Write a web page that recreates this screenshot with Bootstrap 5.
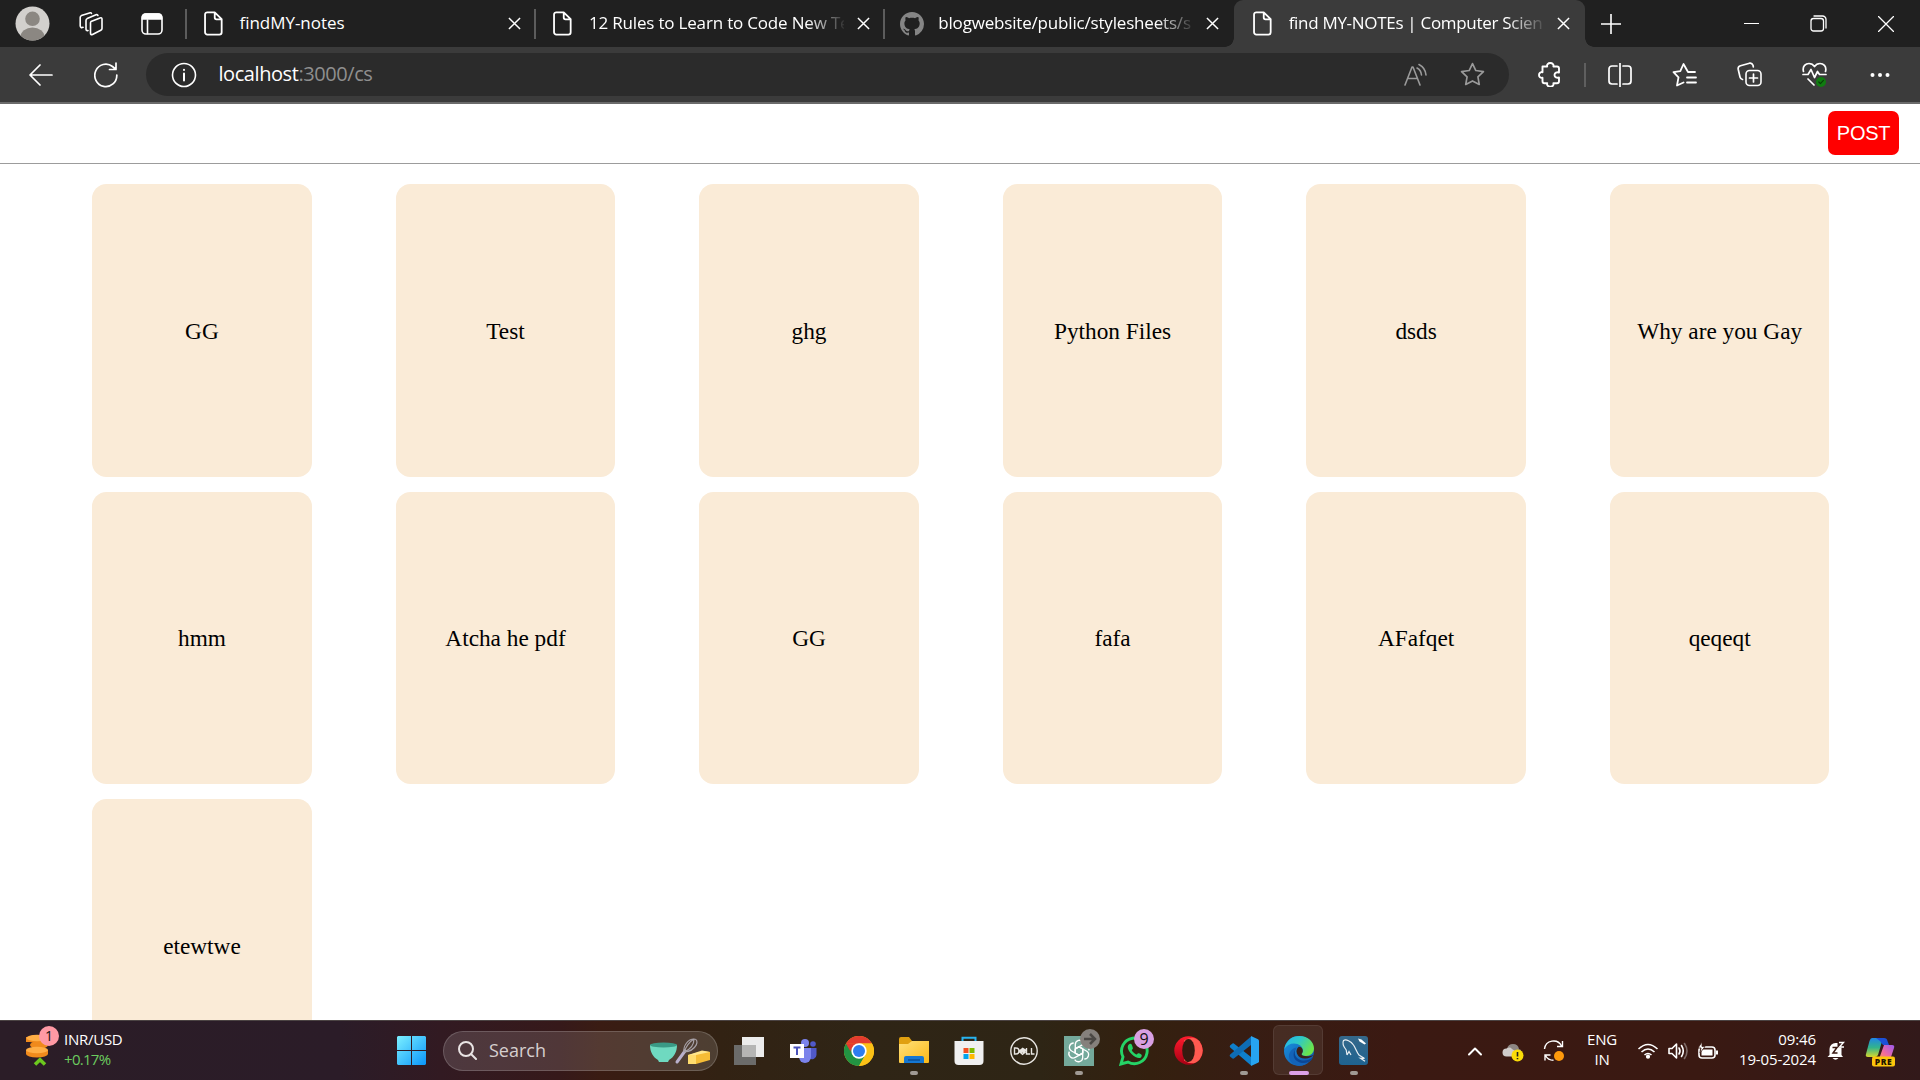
<!DOCTYPE html>
<html lang="en">
<head>
<meta charset="utf-8">
<title>find MY-NOTEs | Computer Science</title>
<link href="https://cdn.jsdelivr.net/npm/bootstrap@5.3.0/dist/css/bootstrap.min.css" rel="stylesheet">
<style>
html,body{height:100%;overflow:hidden}
body{font-family:"Open Sans","Noto Sans",sans-serif;background:#fff;color:#fff}
svg{display:block;flex:none}
.ln{fill:none;stroke:#fff;stroke-width:1.6;stroke-linecap:round;stroke-linejoin:round}
.dim{stroke:#9a9a9a}
/* browser tab strip */
.tabstrip{height:47px;background:#202020}
.strip-tools{width:185.5px;padding-left:15px}
.tool-spaces{margin-left:29px}
.tool-vtabs{margin-left:38px}
.btab{width:349.4px;padding-left:16px;position:relative}
.btab::before{content:"";position:absolute;left:-1px;top:9px;width:2px;height:30px;background:#5c5c5c}
.btab-on{background:#3b3b3b;border-radius:9px 9px 0 0;width:351px;padding-left:17px}
.btab-on::before{display:none}
.btab-ico{width:24px}
.btab-txt{width:255px;margin-left:14px;font-size:17px;line-height:24px;margin-top:-2px;white-space:nowrap;letter-spacing:-.18px}
.tight{letter-spacing:-.3px}
.loose{letter-spacing:-.04px}
.fade-end{-webkit-mask-image:linear-gradient(90deg,#000 218px,transparent 258px);mask-image:linear-gradient(90deg,#000 218px,transparent 258px)}
.btab-x{margin-left:13px}
.foot{position:absolute;bottom:0;width:9px;height:9px}
.foot-l{left:-9px;background:radial-gradient(circle at 0 0,#202020 8.5px,#3b3b3b 9px)}
.foot-r{right:-9px;background:radial-gradient(circle at 100% 0,#202020 8.5px,#3b3b3b 9px)}
.winbtn{width:67.4px}
/* toolbar */
.toolbar{height:57px;background:#3b3b3b;border-bottom:2px solid #6b6b6b}
.nav-slot{width:65px}
.omni{width:1363px;height:43px;border-radius:22px;background:#2b2b2b;padding-left:25px;margin-left:8px;margin-right:8px}
.omni-url{font-size:20px;line-height:28px;margin-left:21.500px;margin-top:-1px;letter-spacing:-.43px;color:#8f8f8f}
.omni-url b{font-weight:400;color:#fff}
.omni-star{margin-left:32px;margin-right:24px}
.tsep{width:2px;height:24px;background:#5f5f5f;margin-left:2px;margin-right:1px}
/* page */
.pagebar{height:60px;border-bottom:1px solid #9c9c9c;padding-right:21px;padding-top:7px}
.post-btn{width:71px;height:44px;border-radius:7px;background:#f00;color:#fff;font:20px "Liberation Sans",Arial,sans-serif;letter-spacing:-.3px}
.viewport{height:916px;overflow:hidden}
.notes{padding:20.25px 90px 0 92.300px;row-gap:15.050px;column-gap:84.250px}
.note{width:219.3px;height:292.5px;border-radius:14.5px;background:#faebd7;color:#000;font:23.300px "Liberation Serif","Times New Roman",serif;padding-top:1px}
/* taskbar */
.taskbar{height:60px;border-top:1px solid #4b4343;background:linear-gradient(90deg,#2b1d27 0,#2b1c28 340px,#321a22 440px,#36191a 560px,#3a1c13 600px,#322213 720px,#2f2516 860px,#2e2515 1040px,#34200f 1150px,#371d13 1240px,#3b1912 1400px,#3a1912 1700px,#32191a 1920px)}
.widget{width:384px;padding-left:25px}
.widget-ico{width:39px;margin-top:-4px}
.t15{font-size:15px;line-height:20px;letter-spacing:-.26px;margin-top:-3px}
.gain{color:#6ccb5f;letter-spacing:-.7px}
.clock{width:97px;letter-spacing:-.12px}
.lang{width:36px}
.slot{width:55px;height:59px;position:relative}
.pill{position:absolute;left:23.5px;bottom:5px;width:8px;height:4px;border-radius:2px;background:#a09a94}
.slot-on::before{content:"";position:absolute;left:2px;top:4px;width:50px;height:50px;border-radius:6px;background:#ffffff12;border:1px solid #ffffff14}
.slot-on .pill{left:17.5px;width:20px;background:#dca0e6}
.bub{position:absolute;border-radius:50%;width:20px;height:20px;font-size:14px;line-height:20px;text-align:center;color:#111}
.bub-coin{left:14px;top:-6px;background:#ff99a4}
.bub-gpt{left:29px;top:8px;background:#85807c}
.bub-wa{left:28px;top:8px;background:#d9a0e3;font-size:16px}
.searchbox{width:275px;height:40px;border-radius:20px;background:#ffffff22;border:1px solid #ffffff2c;color:#d6cfcf;font-size:18px;padding:0 6px 0 14px;margin:0 3px 0 4px}
.searchbox span{margin-left:12px}
.tray-chev{margin-right:19px}
.tray-cloud{margin-right:19px;margin-top:4px}
.tray-sync{margin-right:19px}
.tray-wifi{margin-left:17px}
.tray-ico{margin-left:9px}
.tray-bell{margin-left:11px}
.tray-pilot{margin-left:20px;margin-right:24px;margin-top:3px}
</style>
</head>
<body class="d-flex flex-column">
<svg width="0" height="0" class="position-absolute">
<defs>
<symbol id="page" viewBox="0 0 20 26"><path d="M3.5 1.2h7.8L18.6 8.5v13.8a2.4 2.4 0 0 1-2.4 2.4H3.5a2.4 2.4 0 0 1-2.4-2.4V3.6a2.4 2.4 0 0 1 2.4-2.4zM11.3 1.2v5.6a1.8 1.8 0 0 0 1.8 1.8h5.4" fill="none" stroke="#fff" stroke-width="1.9" stroke-linejoin="round"/></symbol>
<symbol id="cross" viewBox="0 0 14 14"><path d="M1 1l12 12M13 1L1 13" fill="none" stroke="#fff" stroke-width="1.6"/></symbol>
<linearGradient id="win" x1="0" y1="0" x2="1" y2="1"><stop offset="0" stop-color="#7cf0ff"/><stop offset="1" stop-color="#0a95fa"/></linearGradient>
<linearGradient id="fold" x1="0" y1="0" x2="1" y2="1"><stop offset="0" stop-color="#ffe07a"/><stop offset="1" stop-color="#fbb917"/></linearGradient>
<linearGradient id="eg1" x1="0" y1="0" x2="1" y2=".5"><stop offset="0" stop-color="#25b4ee"/><stop offset=".5" stop-color="#2fc9c6"/><stop offset="1" stop-color="#6be44a"/></linearGradient>
<linearGradient id="eg2" x1="0" y1="0" x2="1" y2="1"><stop offset="0" stop-color="#1a94e0"/><stop offset="1" stop-color="#0f52a8"/></linearGradient>
<linearGradient id="op" x1="0" y1="0" x2="0" y2="1"><stop offset="0" stop-color="#ff1b2d"/><stop offset="1" stop-color="#a70014"/></linearGradient>
<linearGradient id="cp1" x1="0" y1="0" x2="0" y2="1"><stop offset="0" stop-color="#1f86e6"/><stop offset=".5" stop-color="#32b48c"/><stop offset="1" stop-color="#d6d62c"/></linearGradient>
<linearGradient id="cp2" x1="1" y1="0" x2="0" y2="1"><stop offset="0" stop-color="#9a5af0"/><stop offset=".6" stop-color="#f06aa0"/><stop offset="1" stop-color="#f89a50"/></linearGradient>
<linearGradient id="my" x1="0" y1="0" x2="0" y2="1"><stop offset="0" stop-color="#35688a"/><stop offset="1" stop-color="#1f6390"/></linearGradient>
</defs></svg>

<header class="tabstrip d-flex">
  <div class="strip-tools d-flex align-items-center">
    <svg width="35" height="35" viewBox="0 0 35 35"><clipPath id="av"><circle cx="17.5" cy="17.5" r="17"/></clipPath><g clip-path="url(#av)"><path fill="#d2d0cd" d="M0 0h35v35H0z"/><circle cx="17.5" cy="12.8" r="7.3" fill="#8b8782"/><ellipse cx="17.5" cy="31" rx="12" ry="9.5" fill="#8b8782"/></g></svg>
    <svg class="ln tool-spaces" width="24" height="24" viewBox="0 0 24 24"><path d="M12 9.5l9-3.6q2-.6 2 1.2v9.4q0 1.2-1.2 1.8l-8.3 4.2q-2 .6-2-1.2V11q0-1 .5-1.500zM9 18.500q-2 .6-2-1.500V8.500q0-1.300 1.200-1.900L17 2.800q1.600-.5 1.900.7M4 15.300q-2.500 1-2.800-1.300V5.500q0-1.300 1.200-1.900L10.500.9q1.500-.4 2 .6"/></svg>
    <svg class="ln tool-vtabs" width="22" height="22" viewBox="0 0 22 22"><rect x="1" y="1" width="20" height="20" rx="4"/><path d="M1.500 6V4a3 3 0 0 1 3-3h13a3 3 0 0 1 3 3v2z" fill="#fff"/><path d="M6.500 7v13.500"/></svg>
  </div>
  <div class="btab d-flex align-items-center">
    <div class="btab-ico d-flex justify-content-center"><svg width="19" height="25"><use href="#page"/></svg></div>
    <div class="btab-txt loose">findMY-notes</div><svg class="btab-x" width="13" height="13"><use href="#cross"/></svg>
  </div>
  <div class="btab d-flex align-items-center">
    <div class="btab-ico d-flex justify-content-center"><svg width="19" height="25"><use href="#page"/></svg></div>
    <div class="btab-txt fade-end">12 Rules to Learn to Code New Te</div><svg class="btab-x" width="13" height="13"><use href="#cross"/></svg>
  </div>
  <div class="btab d-flex align-items-center">
    <div class="btab-ico"><svg width="24" height="24" viewBox="0 0 16 16"><path fill="#858585" d="M8 0C3.58 0 0 3.58 0 8c0 3.540 2.290 6.530 5.470 7.590.4.070.55-.17.55-.38 0-.19-.01-.82-.01-1.490-2.010.37-2.530-.49-2.690-.94-.09-.23-.48-.94-.82-1.130-.28-.15-.68-.52-.01-.53.63-.01 1.080.58 1.230.82.72 1.210 1.870.87 2.330.66.070-.52.28-.87.51-1.070-1.780-.2-3.640-.89-3.640-3.950 0-.87.310-1.590.82-2.150-.08-.2-.36-1.020.08-2.120 0 0 .67-.21 2.200.82.640-.18 1.320-.27 2-.27s1.360.090 2 .27c1.530-1.040 2.200-.82 2.200-.82.440 1.100.16 1.920.080 2.120.51.560.82 1.270.82 2.150 0 3.070-1.870 3.750-3.650 3.950.29.250.540.730.540 1.480 0 1.070-.01 1.930-.01 2.200 0 .21.150.46.550.38A8.010 8.010 0 0 0 16 8c0-4.420-3.580-8-8-8z"/></svg></div>
    <div class="btab-txt fade-end">blogwebsite/public/stylesheets/s</div><svg class="btab-x" width="13" height="13"><use href="#cross"/></svg>
  </div>
  <div class="btab btab-on d-flex align-items-center"><i class="foot foot-l"></i><i class="foot foot-r"></i>
    <div class="btab-ico d-flex justify-content-center"><svg width="19" height="25"><use href="#page"/></svg></div>
    <div class="btab-txt tight fade-end">find MY-NOTEs | Computer Scien</div><svg class="btab-x" width="13" height="13"><use href="#cross"/></svg>
  </div>
  <div class="d-flex align-items-center ps-3"><svg class="ln" width="20" height="20" viewBox="0 0 20 20"><path d="M10 0v20M0 10h20"/></svg></div>
  <div class="d-flex ms-auto align-items-center">
    <div class="winbtn"><svg class="ln mx-auto" width="15" height="15" viewBox="0 0 15 15"><path d="M0 7.500h15" stroke-width="1.200"/></svg></div>
    <div class="winbtn"><svg class="ln mx-auto" width="17" height="17" viewBox="0 0 17 17"><rect x="1" y="3.500" width="12.500" height="12.500" rx="2.500" stroke-width="1.300"/><path d="M4 1h8.500A3.500 3.500 0 0 1 16 4.500V13" stroke-width="1.300"/></svg></div>
    <div class="winbtn"><svg class="ln mx-auto" width="16" height="16" viewBox="0 0 16 16"><path d="M.5.5l15 15M15.500.5l-15 15" stroke-width="1.300"/></svg></div>
  </div>
</header>

<nav class="toolbar d-flex align-items-center">
  <div class="nav-slot ms-2"><svg class="ln mx-auto" width="24" height="22" viewBox="0 0 24 22"><path d="M23 11H1.500M11 1L1 11l10 10" stroke-width="1.700"/></svg></div>
  <div class="nav-slot"><svg class="ln mx-auto" width="24" height="26" viewBox="0 0 24 26"><path d="M22.800 13A11 11.200 0 1 1 18.500 4.500L21.500 7M22 1v6.500h-6.500" stroke-width="1.700"/></svg></div>
  <div class="omni d-flex align-items-center">
    <svg class="ln" width="26" height="26" viewBox="0 0 26 26"><circle cx="13" cy="13" r="11.500"/><path d="M13 11.500v7M13 7.700v.3" stroke-width="2"/></svg>
    <div class="omni-url"><b>localhost</b>:3000/cs</div>
    <svg class="ln dim ms-auto" width="24" height="24" viewBox="0 0 24 24"><path d="M1 22L8 4h1l7 18M3.500 15.500h10M13 5q4 2 4.500 7M15 1.500q6.500 3.500 7 10.500"/></svg>
    <svg class="ln dim omni-star" width="25" height="25" viewBox="0 0 24 24"><path d="M12 1.500l3.200 6.700 7.300 1-5.300 5.100 1.300 7.300L12 18.200l-6.500 3.400 1.300-7.300L1.500 9.200l7.300-1z"/></svg>
  </div>
  <div class="nav-slot"><svg class="ln mx-auto" width="24" height="25" viewBox="0 0 24 25"><path d="M4.500 4.500h4.700C8.600 2.600 10 1 12.300 1s3.700 1.600 3.100 3.500H19a2 2 0 0 1 2 2v4c-2-.8-4.500.2-4.500 2.500s2.500 3.300 4.500 2.500v3.700a2 2 0 0 1-2 2h-3.600c.6 1.900-.8 3.500-3.100 3.500s-3.700-1.600-3.100-3.500H6.500a2 2 0 0 1-2-2v-3.500C2.500 16.300 1 15 1 13s1.500-3.300 3.500-2.700z" stroke-width="1.900"/></svg></div>
  <div class="tsep"></div>
  <div class="nav-slot"><svg class="ln mx-auto" width="24" height="24" viewBox="0 0 24 24"><path d="M12 0v24M9 3H4a3 3 0 0 0-3 3v12a3 3 0 0 0 3 3h5M15 3h5a3 3 0 0 1 3 3v12a3 3 0 0 1-3 3h-5" stroke-width="1.700"/></svg></div>
  <div class="nav-slot"><svg class="ln mx-auto" width="25" height="24" viewBox="0 0 25 24"><path d="M23 9h-7l-4.500-8L8.300 8.200 1.500 9.200l5 5.200L5 22.500l6.500-3M15 14.500h9M15 19.500h9" stroke-width="1.800"/></svg></div>
  <div class="nav-slot"><svg class="ln mx-auto" width="25" height="25" viewBox="0 0 25 25"><rect x="9" y="8.500" width="15" height="15" rx="3.500"/><path d="M16.500 12v8M12.500 16h8M5.500 17.500q-2-.5-2.500-2.500L1.200 7.200Q.8 4.500 3.500 3.700L12.500 1.200q2.500-.5 3.500 2l.3 1.600" stroke-width="1.700"/></svg></div>
  <div class="nav-slot"><svg class="ln mx-auto" width="25" height="25" viewBox="0 0 25 25"><path d="M1.500 9.500C0 4 4 1.500 7 1.500c3 0 4.500 1.500 5.500 3 1-1.500 2.500-3 5.500-3s7 2.500 5.500 8M1 12.500h5l3-5 3.500 8 3-6 2 3H24M6 17l6 6" stroke-width="1.700"/><circle cx="19" cy="20" r="5" fill="#107c10" stroke="none"/><path d="M16.800 20l1.600 1.600 3-3.200" stroke="#083e08" stroke-width="1.200"/></svg></div>
  <div class="nav-slot"><svg class="mx-auto" width="20" height="6" fill="#fff"><circle cx="2.500" cy="3" r="2"/><circle cx="10" cy="3" r="2"/><circle cx="17.500" cy="3" r="2"/></svg></div>
</nav>

<main class="viewport bg-white">
  <div class="pagebar d-flex align-items-start justify-content-end"><button class="post-btn border-0 p-0">POST</button></div>
  <section class="notes d-flex flex-wrap">
    <div class="note d-flex align-items-center justify-content-center">GG</div>
    <div class="note d-flex align-items-center justify-content-center">Test</div>
    <div class="note d-flex align-items-center justify-content-center">ghg</div>
    <div class="note d-flex align-items-center justify-content-center">Python Files</div>
    <div class="note d-flex align-items-center justify-content-center">dsds</div>
    <div class="note d-flex align-items-center justify-content-center">Why are you Gay</div>
    <div class="note d-flex align-items-center justify-content-center">hmm</div>
    <div class="note d-flex align-items-center justify-content-center">Atcha he pdf</div>
    <div class="note d-flex align-items-center justify-content-center">GG</div>
    <div class="note d-flex align-items-center justify-content-center">fafa</div>
    <div class="note d-flex align-items-center justify-content-center">AFafqet</div>
    <div class="note d-flex align-items-center justify-content-center">qeqeqt</div>
    <div class="note d-flex align-items-center justify-content-center">etewtwe</div>
  </section>
</main>

<footer class="taskbar d-flex align-items-center">
  <div class="widget d-flex align-items-center">
    <div class="widget-ico position-relative">
      <svg width="25" height="34" viewBox="0 0 25 34"><g fill="#f08a1c"><ellipse cx="12" cy="7" rx="11" ry="4"/><path d="M1 5h22v5H1z"/><ellipse cx="14" cy="13" rx="9" ry="4"/><path d="M1 18h22v4H1z"/><ellipse cx="12" cy="22" rx="11" ry="3.500"/></g><ellipse cx="12" cy="6" rx="10.500" ry="3.300" fill="#ffae45"/><ellipse cx="12" cy="18" rx="11" ry="3.300" fill="#ffae45"/><path d="M10 32.500l5-4.700 5 4.700" fill="none" stroke="#6cc81e" stroke-width="3.600"/></svg>
      <span class="bub bub-coin">1</span>
    </div>
    <div class="t15"><div>INR/USD</div><div class="gain">+0.17%</div></div>
  </div>
  <div class="slot d-flex align-items-center justify-content-center"><svg width="29" height="29" viewBox="0 0 29 29"><path fill="url(#win)" d="M1 0h13v14H0V1zM15 0h13l1 1v13H15zM0 15h14v14H1l-1-1zM15 15h14v13l-1 1H15z"/></svg></div>
  <div class="searchbox d-flex align-items-center">
    <svg width="19" height="19" viewBox="0 0 19 19" fill="none" stroke="#e9e4e4" stroke-width="2" stroke-linecap="round"><circle cx="8" cy="8" r="7"/><path d="M13 13l5 5"/></svg>
    <span>Search</span>
    <svg class="ms-auto" width="62" height="28" viewBox="0 0 62 28"><path d="M1 8h27c0 7-3 12-8 15l-1 2h-9l-1-2C4 20 1 15 1 8z" fill="#6fd9c0"/><ellipse cx="14.500" cy="8" rx="13.500" ry="2.600" fill="#3a9a86"/><path d="M28 25l8-11" stroke="#b9b0cc" stroke-width="3" stroke-linecap="round"/><g fill="none" stroke="#a8a2a8" stroke-width="1.200"><path d="M35 15c-1-6 4-13 10-13s3 12-10 13zM35 15c2-5 5-10 10-13M35 15c5-2 10-6 10-13"/></g><path d="M39 18l16-4 6 1v8l-14 4h-8z" fill="#f6bd36"/><path d="M39 18h8v9h-8z" fill="#ffdc6e"/><path d="M39 18l14-4.500 8 1.500-14 3z" fill="#ffe68c"/></svg>
  </div>
  <div class="slot d-flex align-items-center justify-content-center"><svg width="30" height="28" viewBox="0 0 30 28"><path d="M8 0h22v20H8z" fill="#ececec"/><path d="M0 8h22v20H0z" fill="#6b6b6a"/><path d="M8 8h14v12H8z" fill="#b5b5b4"/></svg></div>
  <div class="slot d-flex align-items-center justify-content-center"><svg width="27" height="24" viewBox="0 0 27 24"><circle cx="15" cy="4" r="4" fill="#7b83eb"/><circle cx="23" cy="5" r="2.800" fill="#5059c9"/><path d="M19 9h7.500v7a4.500 4.500 0 0 1-7 3.500z" fill="#5059c9"/><path d="M9 9h12v9a6 6 0 0 1-12 0z" fill="#7b83eb"/><path d="M0 5h14v14H0z" fill="#fff"/><path d="M3.500 8.500h7M7 8.500V16" stroke="#4b53bc" stroke-width="2"/></svg></div>
  <div class="slot d-flex align-items-center justify-content-center"><svg width="30" height="30" viewBox="0 0 48 48"><circle cx="24" cy="24" r="24" fill="#fbc116"/><path d="M3.200 12A24 24 0 0 1 44.800 12H24z" fill="#e33b2e"/><path d="M3.200 12a24 24 0 0 0 20.800 36l10.400-18H24z" fill="#229342"/><path d="M24 48a24 24 0 0 0 20.800-36H24l10.400 18z" fill="#fbc116"/><path d="M3.200 12L13.600 30 24 12z" fill="#e33b2e"/><path d="M3.200 12l10.400 18 6 4 4.400-12z" fill="#229342"/><path d="M3.200 12H44.800L24 12l-9 6-5 6z" fill="#e33b2e"/><circle cx="24" cy="24" r="12.300" fill="#fff"/><circle cx="24" cy="24" r="9.600" fill="#2f7df0"/></svg></div>
  <div class="slot d-flex align-items-center justify-content-center"><svg width="30" height="27" viewBox="0 0 30 27"><path d="M0 2q0-2 2-2h8l3 4v6H0z" fill="#e0a010"/><path d="M0 7h9l4-3h17v21q0 1-1 1H1q-1 0-1-1z" fill="url(#fold)"/><path d="M5 26v-5q0-2 2-2h16q2 0 2 2v5z" fill="#1577d2"/><path d="M9 23h12" stroke="#0a4c96" stroke-width="1.400"/></svg><i class="pill"></i></div>
  <div class="slot d-flex align-items-center justify-content-center"><svg width="30" height="30" viewBox="0 0 30 30"><path d="M8.500 6V1.800h13V6" fill="none" stroke="#28b4f0" stroke-width="2"/><path d="M.5 5h29v20q0 4-4 4h-21q-4 0-4-4z" fill="#f0f0f0"/><path d="M9.500 12h5v5h-5z" fill="#f25022"/><path d="M15.500 12h5v5h-5z" fill="#7fba00"/><path d="M9.500 18h5v5h-5z" fill="#00a4ef"/><path d="M15.500 18h5v5h-5z" fill="#ffb900"/></svg></div>
  <div class="slot d-flex align-items-center justify-content-center"><svg width="28" height="28" viewBox="0 0 28 28" fill="none" stroke="#e8e6e2"><circle cx="14" cy="14" r="13.200" stroke-width="1.400"/><path d="M4.500 11v6h1.500a3 3 0 0 0 0-6zM9 14.300l3.700-3 1 .8-3 2.300 1 .8 3.100-2.500 1 .8-3 2.500M9 14.300l3.500 3 3-2.300M16.500 11v6H20M21.500 11v6h3" stroke-width="1.400"/></svg></div>
  <div class="slot d-flex align-items-center justify-content-center"><svg width="30" height="30" viewBox="0 0 30 30"><path d="M0 0h30v30H0z" fill="#74a99b"/><g fill="none" stroke="#fff" stroke-width="1.300"><path id="kn" d="M11.300 17.200V8.600a4.300 4.300 0 0 1 8-2.200M11.300 12.900l3.700-2.200 3.700 2.100"/><use href="#kn" transform="rotate(60 15 15)"/><use href="#kn" transform="rotate(120 15 15)"/><use href="#kn" transform="rotate(180 15 15)"/><use href="#kn" transform="rotate(240 15 15)"/><use href="#kn" transform="rotate(300 15 15)"/></g></svg><span class="bub bub-gpt"><svg width="20" height="20" fill="none" stroke="#4b4845" stroke-width="2.500"><path d="M4 10h11M10 5l5 5-5 5"/></svg></span><i class="pill"></i></div>
  <div class="slot d-flex align-items-center justify-content-center"><svg width="30" height="30" viewBox="0 0 30 30"><path d="M2 28l2-7.200A12.800 12.800 0 1 1 9 26z" fill="none" stroke="#25d366" stroke-width="2.900"/><path d="M10.500 8c-3 2-2 6 2 10s9 5.500 10 2.500c.7-1.500.2-2-2.500-3.200-1.500-.6-1.500.8-2.500 1.200-1.500-.3-4.500-3.200-4.700-4.500.6-.8 1.400-1 1-2.200C12.800 8 12.200 7.500 10.500 8z" fill="#25d366"/></svg><span class="bub bub-wa">9</span></div>
  <div class="slot d-flex align-items-center justify-content-center"><svg width="29" height="29" viewBox="0 0 29 29"><circle cx="14.500" cy="14.500" r="14.200" fill="url(#op)"/><path d="M10 4.500q9-6 15.500.8 6.500 9.700 0 18.400-6.500 6.800-15.500.8z" fill="#ff5a50"/><ellipse cx="14.500" cy="14.500" rx="6.300" ry="11.500" fill="#351b10"/></svg></div>
  <div class="slot d-flex align-items-center justify-content-center"><svg width="30" height="30" viewBox="0 0 30 30"><path d="M1 9.500l2.500-2Q4.500 7 5.500 8L22 21v8.500L1.200 11.500q-1-1 0-2z" fill="#0f7fcb"/><path d="M1 20.500l2.500 2q1 .5 2-.5L22 9V.5L1.200 18.500q-1 1-.2 2z" fill="#0e6cb4"/><path d="M22 0l7 3.200q1 .5 1 1.500v20.600q0 1-1 1.500L22 30z" fill="#27a4f0"/></svg><i class="pill"></i></div>
  <div class="slot slot-on d-flex align-items-center justify-content-center"><svg class="position-relative" width="30" height="30" viewBox="0 0 30 30"><circle cx="15" cy="15" r="15" fill="url(#eg2)"/><path d="M.3 13C2 4.500 8 0 15.500 0 24 0 30 6 30 12.500c0 4.500-3.500 7.500-8 7.500-3 0-5-1-4.500-2 1-1.500 1.300-2 1.300-3.500C18.800 10.500 15 7.500 10 7.500 6 7.500 2.500 9.500.3 13z" fill="url(#eg1)"/><path d="M10.500 15.500C9 22 15 28 25 25.500 20 31 12 31 7 26 2 19 7 12 13 11.500c-1.500 1-2.500 2.500-2.500 4z" fill="#1363b8"/><path d="M13 11.500c-5 5-1 13 7 13 3 0 5.500-.8 8-2.500.8-.4.500 1-1 2.500-1.500 1-7 5-14 .5-4.500-3-4.500-9.500 0-13.500z" fill="#0b4694"/><path d="M18.800 14.500c0-2-1.800-3.700-4-3.700-2 1.500-3 4-1.800 7 1.500 3.500 5 5 8.500 4.800 3 0 6-1.600 8-3.600-4.500 2-12 1.500-12-1 1-1.200 1.300-2 1.300-3.500z" fill="#3b2118"/></svg><i class="pill"></i></div>
  <div class="slot d-flex align-items-center justify-content-center"><svg width="29" height="29" viewBox="0 0 29 29"><rect width="29" height="29" rx="3" fill="url(#my)"/><path d="M8 19l-.8-5C4 10 3.500 6.500 4.500 4.500 7 3 12 5 14.500 9c2 3 3.500 8 5.500 10l5.500 3.500-4-.3 4.500 3M8 19l2-3.500 2 3.500" fill="none" stroke="#e8eef2" stroke-width="1.200"/><path d="M19 2.500l3.500 1 4.500 4-1.500 1-5-3z" fill="#fff"/></svg><i class="pill"></i></div>

  <div class="d-flex align-items-center ms-auto">
    <svg class="ln tray-chev" width="16" height="10" viewBox="0 0 16 10"><path d="M2 8.500l6-6 6 6" stroke-width="2"/></svg>
    <svg class="tray-cloud" width="22" height="20" viewBox="0 0 22 20"><path d="M5 6Q6 1 11 1t6 5l2 1v6H7z" fill="#8d8683"/><path d="M4.500 13.500a4 4 0 0 1 0-8Q8 3.500 10 6l6 4-1 3.500z" fill="#d0ccca"/><circle cx="15.500" cy="12.500" r="6" fill="#fbdc08"/><path d="M15.500 9v4.500M15.500 15v1.300" stroke="#222" stroke-width="1.600"/></svg>
    <svg class="tray-sync" width="22" height="22" viewBox="0 0 22 22"><path d="M1.500 9A9 9 0 0 1 18.500 6M19.500 1v5.500H14M2 20.500V15h5.500M2.500 15.500Q5 20.300 10.500 20.300" fill="none" stroke="#fff" stroke-width="1.400"/><circle cx="16" cy="16" r="5" fill="#ff9a0c"/></svg>
    <div class="t15 lang text-center"><div>ENG</div><div>IN</div></div>
    <svg class="tray-wifi" width="22" height="16" viewBox="0 0 22 16" fill="none" stroke="#fff" stroke-width="1.600"><path d="M1.500 6q9.500-9 19 0M4.500 9q6.500-6 13 0M7.500 12q3.500-3 7 0"/><circle cx="11" cy="13.700" r="1.300" fill="#fff"/></svg>
    <svg class="ln tray-ico" width="20" height="18" viewBox="0 0 20 18"><path d="M1 6.500h3L8.500 2v14L4 11.500H1zM11 6q2 3 0 6M13.500 3.500q3.500 5.500 0 11"/><path d="M16.500 1.500q5 7.500 0 15" stroke="#7d6a66"/></svg>
    <svg class="tray-ico" width="22" height="18" viewBox="0 0 22 18"><rect x="2" y="5" width="16" height="11" rx="3" fill="none" stroke="#fff" stroke-width="1.600"/><path d="M4.500 7.500h11V13.500h-11zM19 8.500h2v4h-2z" fill="#fff"/><path d="M5 0L1 6h3l-1 5 5-6.500H5z" fill="#fff" stroke="#3a1912" stroke-width=".8"/></svg>
    <div class="t15 clock text-end"><div>09:46</div><div>19-05-2024</div></div>
    <svg class="tray-bell" width="18" height="20" viewBox="0 0 18 20"><path d="M2.500 14V8a6 6 0 0 1 6-6h2v4.500h4V14l1.500 2H.5zM5.500 17h6q-3 3.500-6 0z" fill="#fff"/><path d="M5.500 6.500H10L6 12h4.500" fill="none" stroke="#3a1912" stroke-width="1.500"/><path d="M12 1.500h4.500L12.500 6H17" fill="none" stroke="#fff" stroke-width="1.400"/></svg>
    <svg class="tray-pilot" width="31" height="30" viewBox="0 0 31 30"><path d="M7 1h11l-5 17q-1 2-3 2H3q-3 0-2-3L4.500 4Q5.500 1 7 1z" fill="url(#cp1)"/><path d="M11 1h8q3 0 3.500 3l1.500 4h-6L15 4z" fill="#1c50d8"/><path d="M19 8h8q3 0 2 3l-3 9q-.5 2-3 2h-9z" fill="url(#cp2)"/><rect x="7" y="19.500" width="23" height="10" rx="2" fill="#fcc50c"/><text x="18.500" y="27.700" text-anchor="middle" font-size="8.500" font-weight="800" fill="#1c1400" font-family="Open Sans,sans-serif" letter-spacing=".5">PRE</text></svg>
  </div>
</footer>
<script src="https://cdn.jsdelivr.net/npm/bootstrap@5.3.0/dist/js/bootstrap.bundle.min.js"></script>
</body>
</html>
